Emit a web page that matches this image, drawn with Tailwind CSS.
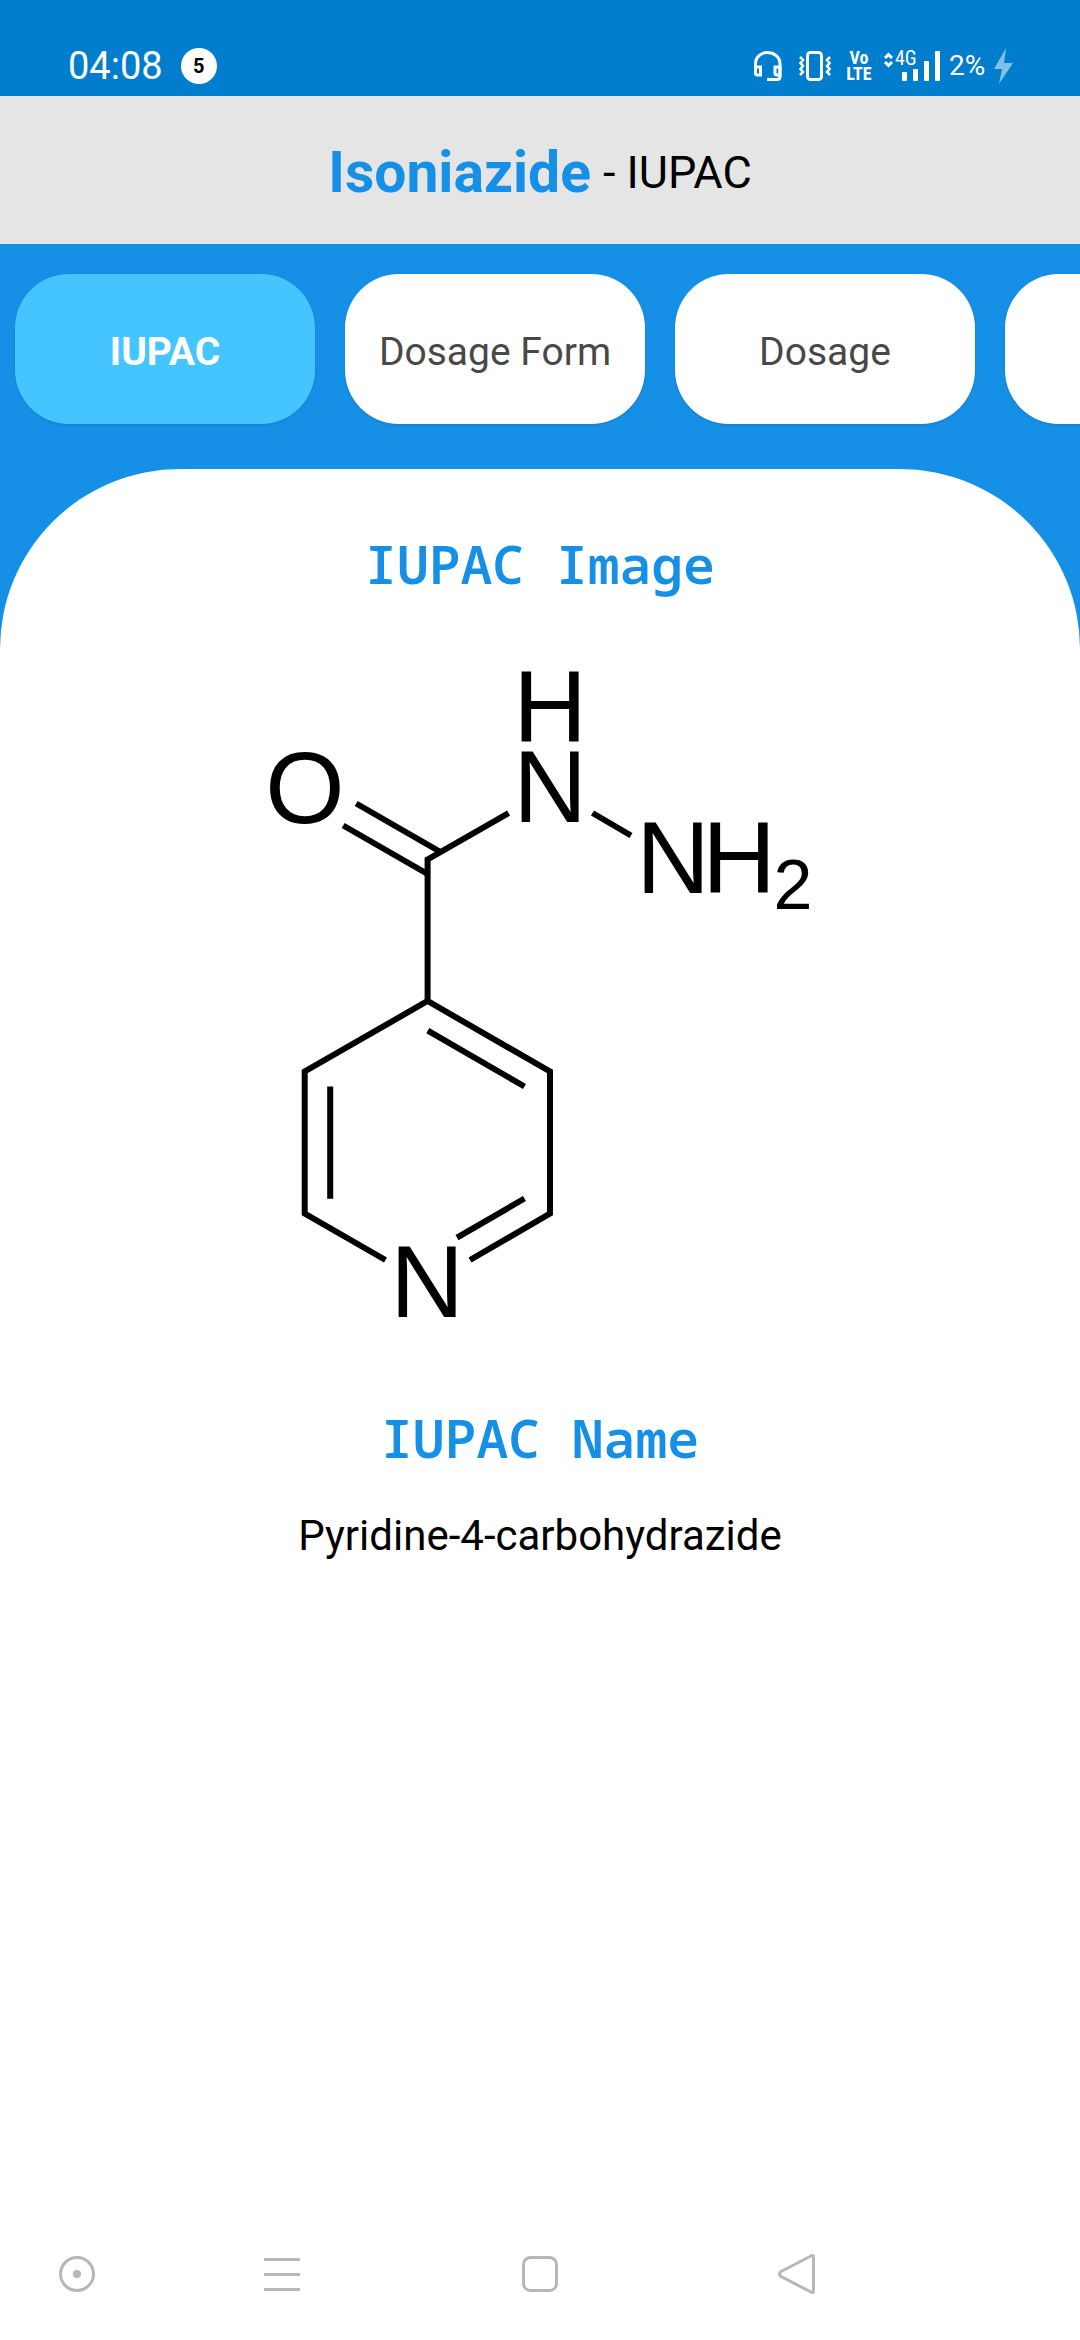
<!DOCTYPE html>
<html lang="en">
<head>
<meta charset="utf-8">
<meta name="viewport" content="width=device-width, initial-scale=1">
<title>Isoniazide - IUPAC</title>
<script src="https://cdn.jsdelivr.net/npm/@tailwindcss/browser@4"></script>
</head>
<body class="flex min-h-screen flex-col bg-[#1690e6] font-['Roboto',sans-serif] text-black">
  <!-- Status bar -->
  <div class="flex h-24 items-end justify-between bg-[#007dcc] pr-[67px] pb-3 pl-[68px] text-white">
    <div class="flex items-center gap-[18px]">
      <span class="text-[38px] leading-9">04:08</span>
      <span class="flex size-9 items-center justify-center rounded-full bg-white text-xl font-bold text-black">5</span>
    </div>
    <div class="flex h-9 items-center">
      <svg class="h-9 w-[30px]" viewBox="0 0 30 36" fill="none" stroke="currentColor" stroke-width="3" aria-label="Headset">
        <path d="M2.500 19V16C2.500 9 8 4.500 14.500 4.500S27 9 27 16V28.500Q27 31.500 24 31.500H14"/>
        <path d="M2.500 19H7.500V27H4.500Q2.500 27 2.500 25ZM27 19H22V25Q22 27 24 27H27Z"/>
      </svg>
      <svg class="ml-4 h-9 w-8" viewBox="0 0 32 36" fill="none" stroke="currentColor" stroke-width="3" aria-label="Vibrate">
        <rect x="8.500" y="4.500" width="14" height="27" rx="3"/>
        <path stroke-width="2.500" d="M1 9L4 12L1.500 15L4 18L1.500 21L4 24L1 27M31 9L28 12L30.500 15L28 18L30.500 21L28 24L31 27"/>
      </svg>
      <span class="ml-4 flex w-6 flex-col items-center font-['Roboto_Condensed','Liberation_Sans_Narrow',sans-serif] text-lg leading-4 font-bold"><span>Vo</span><span>LTE</span></span>
      <div class="relative ml-3 h-9 w-[58px]">
        <svg class="size-full" viewBox="0 0 58 36" fill="currentColor" aria-label="Signal">
          <path d="M2 10L5.500 6.500L9 10M2 14L5.500 17.500L9 14" fill="none" stroke="currentColor" stroke-width="3"/>
          <rect x="19" y="24" width="5" height="9" rx="1"/><rect x="30" y="21" width="5" height="12" rx="1"/><rect x="41" y="13" width="5" height="20" rx="1"/><rect x="52" y="3" width="5" height="30" rx="1"/>
        </svg>
        <span class="absolute top-0 left-3 font-['Roboto_Condensed','Liberation_Sans_Narrow',sans-serif] text-xl leading-5">4G</span>
      </div>
      <span class="ml-2 w-10 text-[28px] leading-9">2%</span>
      <svg class="ml-1 h-9 w-5" viewBox="0 0 20 36" fill="#80bfe6" aria-label="Charging"><path d="M13 0L1 21H9L6 36L20 15H11Z"/></svg>
    </div>
  </div>

  <header class="flex h-[148px] items-center justify-center gap-3 bg-[#e5e5e5] pt-1">
    <h1 class="text-[57px] leading-none font-bold text-[#1690e6]">Isoniazide</h1>
    <span class="text-[45px] leading-none">- IUPAC</span>
  </header>

  <nav class="flex gap-[30px] overflow-hidden px-[15px] pt-[30px] pb-[45px] text-[39px] text-[#484848]">
    <button class="h-[150px] w-[300px] shrink-0 rounded-[54px] bg-[#45c5ff] pt-1.5 font-bold text-white shadow-sm">IUPAC</button>
    <button class="h-[150px] w-[300px] shrink-0 rounded-[54px] bg-white pt-1.5 shadow-sm">Dosage Form</button>
    <button class="h-[150px] w-[300px] shrink-0 rounded-[54px] bg-white pt-1.5 shadow-sm">Dosage</button>
    <button class="h-[150px] w-[300px] shrink-0 rounded-[54px] bg-white pt-1.5 shadow-sm" aria-label="More"></button>
  </nav>

  <main class="flex grow flex-col items-center rounded-t-[180px] bg-white pt-[63px]">
    <h2 class="font-['Droid_Sans_Mono','Noto_Sans_Mono','DejaVu_Sans_Mono',monospace] text-[53px] leading-[64px] font-semibold text-[#1690e6]">IUPAC Image</h2>
    <svg class="mt-11 w-[560px] max-w-full" viewBox="260 640 560 700" role="img" aria-label="Isoniazide structure">
      <g fill="none" stroke="#000" stroke-width="6">
        <path d="M508.600 813L427.600 859.500V1001"/>
        <path d="M356.200 803.500L440.500 852M343.200 825.500L427.600 874M592.500 813L631 835.500"/>
        <path d="M385.500 1260L304.700 1213.500V1071.500L427.600 1001L550 1071.500V1213.500L470 1260"/>
        <path d="M330.200 1086.500V1198.700M427.800 1030.700L524.500 1086.500M457 1237.700L524.500 1198.500"/>
      </g>
      <g font-family="Liberation Sans, Arial, sans-serif" font-size="102" text-anchor="middle">
        <text x="550" y="742">H</text>
        <text x="550" y="822">N</text>
        <text x="305" y="823">O</text>
        <text x="673" y="893">N</text>
        <text x="739" y="893">H</text>
        <text x="793" y="909" font-size="70">2</text>
        <text x="427" y="1317">N</text>
      </g>
    </svg>
    <h2 class="mt-[66px] font-['Droid_Sans_Mono','Noto_Sans_Mono','DejaVu_Sans_Mono',monospace] text-[53px] leading-[64px] font-semibold text-[#1690e6]">IUPAC Name</h2>
    <p class="mt-[42px] text-[42px] leading-[48px]">Pyridine-4-carbohydrazide</p>
  </main>

  <!-- System navigation -->
  <footer class="grid h-[132px] grid-cols-[154fr_256fr_260fr_256fr_154fr] items-center justify-items-center bg-white text-[#b7b7b7]">
    <button aria-label="Assistant"><svg class="size-10" viewBox="0 0 40 40" fill="none" stroke="currentColor" stroke-width="3"><circle cx="20" cy="20" r="16.500"/><circle cx="20" cy="20" r="4" fill="currentColor" stroke="none"/></svg></button>
    <button aria-label="Menu"><svg class="size-10" viewBox="0 0 40 40" stroke="currentColor" stroke-width="3"><path d="M2 5.500H38M2 20.500H38M2 35.500H38"/></svg></button>
    <button aria-label="Home"><svg class="size-10" viewBox="0 0 40 40" fill="none" stroke="currentColor" stroke-width="3"><rect x="3.500" y="3.500" width="33" height="33" rx="7"/></svg></button>
    <button aria-label="Back"><svg class="size-10" viewBox="0 0 40 40" fill="none" stroke="currentColor" stroke-width="3" stroke-linejoin="round"><path d="M33 2Q35.500 0 35.500 3.500V36.500Q35.500 40 33 38L3 22.500Q0 20 3 17.500Z"/></svg></button>
  </footer>
</body>
</html>
